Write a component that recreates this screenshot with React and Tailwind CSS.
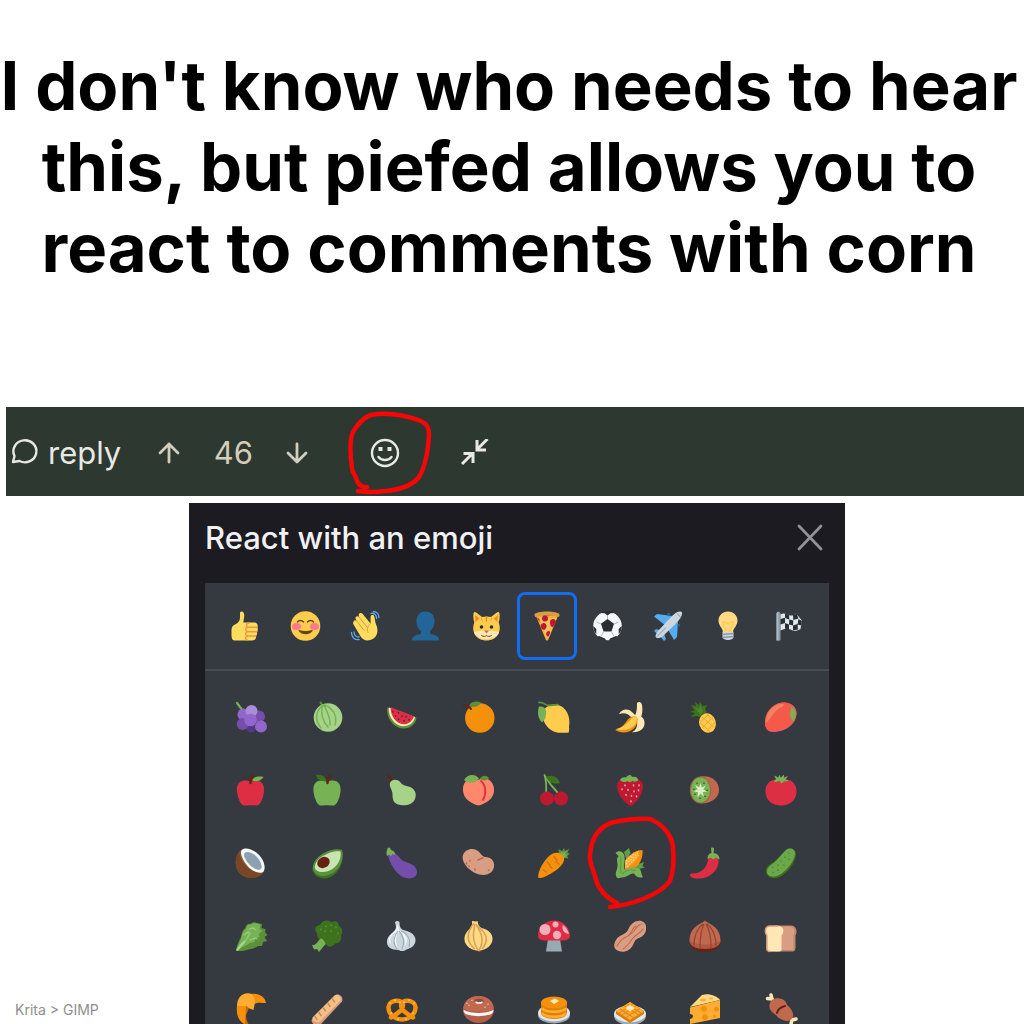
import React from 'react';

// Emoji artwork, every glyph is drawn on a 32x32 board
const art = {
  thumb: (
    <>
      <path fill="#ffdb5e" d="M11 2.5c1.5-2 4-.5 4.2 1.800.3 3-.7 6.200-.9 8.200H25c4 0 4 3.500 3.500 5 .5 2 .3 3.500-.5 4.500.3 2-.2 3.200-1 4 .3 3-1.500 4.500-4 4.500H6c-2.500 0-3.500-2-3.500-5v-5c0-3 .8-5 3.500-6 3.500-1.500 5-4 5-7 0-2 0-4 0-5z" />
      <path fill="none" stroke="#ee9547" strokeWidth="1.4" strokeLinecap="round" d="M18 30c-2-1-2-3.500.5-4-2.500-1-2.500-3.800 0-4.300-2.500-1-2.500-4 .3-4.400-2-1.300-1.500-4.300 1-4.300M18.500 17.300h9.500M18.500 21.700H28M18.500 26H27" />
    </>
  ),
  smile: (
    <>
      <circle cx="15.5" cy="16" r="14.8" fill="#ffcc4d" />
      <ellipse cx="6.5" cy="16.5" rx="4.5" ry="3.6" fill="#ff7892" />
      <ellipse cx="24.5" cy="16.5" rx="4.5" ry="3.6" fill="#ff7892" />
      <path fill="none" stroke="#664500" strokeWidth="1.3" strokeLinecap="round" d="M7.500 12c1.500-2 4.500-2 6 0M17.500 12c1.500-2 4.500-2 6 0" />
      <path fill="#664500" d="M9 20c4 1.200 9 1.200 13 0 .6 0 .8.5.4 1.200-3 4-10.600 4-13.500 0-.4-.7-.3-1.200.1-1.200z" />
    </>
  ),
  wave: (
    <>
      <path fill="#ffdc5d" d="M3.500 12c0-1.600 2-2.300 3.200-1L5.500 8.500C5 6.500 7.500 5.200 9 7L8.700 4.800c.2-2 2.500-2.500 3.800-1l8 9.700c.3-2-.2-5 .2-7 .3-1.800 3-2 3.600 0 .8 3.500.6 5 2 8.500 3 7 .2 14-7 15.300-4 .7-6.800-1-9-4.300l-7-12c-.5-.8-.2-1.400.2-2z" />
      <path fill="none" stroke="#ef9645" strokeWidth="1" strokeLinecap="round" d="M6.700 11l7.500 9.500M9 7l8 10M20.500 13.500c-3 2.500-4 5.500-2.500 9" />
      <path fill="none" stroke="#5dadec" strokeWidth="1.3" strokeLinecap="round" d="M21 3.500c3-1 6 2 5.500 5M23.500 1.500c3.500.2 5.500 3 5.400 6M1.500 22.500c0 5 3.500 7.700 7.500 7M4 22c.3 3.300 2 5 5 5" />
    </>
  ),
  bust: (
    <path fill="#226699" d="M15.500 1.500c5.500 0 9 4 9 9.500 0 4.500-1.800 8-4.500 10v3c5 .8 9 2 9.300 6.500H1.700C2 26 6 24.800 11 24v-3c-2.700-2-4.500-5.500-4.500-10 0-5.500 3.500-9.500 9-9.500z" />
  ),
  cat: (
    <>
      <path fill="#ffcc4d" d="M2.500 3.500c.3-2 1.500-2 3-.7L11 7a17 17 0 0 1 9 0l5.500-4.200c1.500-1.300 2.700-1.300 3 .7.500 4-.2 7-.8 9 3.500 9.500-2 18-12.200 18S-.2 22 3.300 12.500C2.700 10.500 2 7.500 2.500 3.500z" />
      <path fill="#f18f26" d="M4 5l4.500 3.500-4 3.500zM27 5l-4.500 3.500 4 3.500zM14.500 6.500h2l-.5 5h-1zM10.500 7l1.500 4.500L10 9zM20.500 7L19 11.500 21 9z" />
      <circle cx="10.5" cy="17" r="1.8" fill="#292f33" />
      <circle cx="20.5" cy="17" r="1.8" fill="#292f33" />
      <path fill="#fee7b8" d="M3 22l8-1.500 4.500 2 4.500-2 8 1.500c-2 9.500-23 9.500-25 0z" />
      <path fill="#e75a70" d="M13.300 20.500h4.400l-2.200 3z" />
      <path fill="none" stroke="#7a4b12" strokeWidth="1" strokeLinecap="round" d="M10.500 25.500c2 1.500 4 1 5 0 1 1 3 1.500 5 0" />
    </>
  ),
  pizza: (
    <>
      <path fill="#ffac33" d="M5 6h22L17.500 29c-.6 2-2.400 2-3 0z" />
      <path fill="#ffe8b6" d="M8 8h17l-8.500 20-2-2z" opacity=".35" />
      <path fill="#d99e42" d="M3.500 4.500c1-4 24-4 25 0 .3 2-1 3-2.300 2.300C20 5.500 12 5.500 6 7c-1.500.5-2.700-.7-2.500-2.500z" />
      <path fill="#be1931" d="M11 8.500a3 3 0 1 1 6 0 3 3 0 0 1-6 0zM19 12.500a3 3 0 1 1 5.500 1L22 17c-2 .2-3-2-3-4.500zM10 17.500a3 3 0 1 1 5 .5c-1 3-4 2-5-.5zM15.500 22.500c2-2.500 4-1.500 3.500.5l-1.500 3.500c-2 0-3-2-2-4zM6 8c2 0 3 1.500 2.500 4z" />
    </>
  ),
  ball: (
    <>
      <circle cx="15.5" cy="16" r="14.3" fill="#f5f8fa" />
      <path fill="#292f33" d="M15.500 9l6.500 4.800-2.500 7.700h-8L9 13.800zM1.300 16l3 3 0 5c-2-2-3.200-5-3-8zM29.700 16l-3 3 0 5c2-2 3.200-5 3-8zM7 26l6 2.500 1 1.800c-4 0-6.500-1.500-8.500-3.500zM24 26l-6 2.500-1 1.800c4 0 6.500-1.500 8.500-3.500zM8.500 3l4 .3 3 2.200 3-2.200 4-.3c-4-3-10-3-14 0z" />
      <path fill="none" stroke="#99aab5" strokeWidth=".8" d="M15.500 5.500V9M22 14l4.500-2M19.500 22l3 5M11.500 22l-3 5M9 14l-4.500-2" />
    </>
  ),
  plane: (
    <>
      <path fill="#55acee" d="M2 6.500L5 4l15 2-6 10zM26 12l-1 15-3 3-7-12zM2 21l2-2 7 2 3 8-2 2-4-5z" />
      <path fill="#226699" d="M15 3.500l2-1 1.500 2-2 2zM27 17l1.500-2-1.500-1.500-2 2z" />
      <path fill="#ccd6dd" d="M27.500 1.500c2-.5 3 .7 2.500 2.500-.5 3-2.500 5.500-4.500 8L11 26c-3 2.500-6 2.500-7 1.500s-.5-3.500 2-6.500L20 6c2.500-2.300 4.500-4 7.500-4.500z" />
      <path fill="none" stroke="#8899a6" strokeWidth="1" d="M5 26.500l9-9M25 3.500L28.500 7" />
    </>
  ),
  bulb: (
    <>
      <path fill="#ffd983" d="M16 1.500c5.500 0 9.500 4 9.500 9 0 5.500-4.500 7.500-4.500 12H11c0-4.500-4.500-6.500-4.500-12 0-5 4-9 9.500-9z" />
      <path fill="none" stroke="#ffcc4d" strokeWidth="1.5" d="M14.500 22l-4-9.500c2.500-2 3.500 1.500 5.500 1.500s3-3.500 5.500-1.500L17.500 22" />
      <path fill="#ccd6dd" d="M10.500 22h11v5c0 4-11 4-11 0z" />
      <path fill="none" stroke="#8899a6" strokeWidth="1.3" d="M10.500 24.500l11-1M10.500 27.500l11-1" />
    </>
  ),
  flag: (
    <>
      <path fill="#8899a6" d="M3.500 4c0-3 4-3 4 0v26.500h-4z" />
      <path fill="#aab8c2" d="M3.500 4c0-1.500.8-2.300 2-2.300v28.800h-2z" />
      <path fill="#e1e8ed" d="M7.500 4.500c3-2 5-1 8 .5 2.500 1 5 1 7.500-1.500l6 7-1.500 8.500c-4 2.500-7 2-10 .5-3.500-1.500-6-1-10 1z" />
      <path fill="#292f33" d="M12 3.500L16 5l.3 4.500L12 8zM20 5.300l3.500-1.800 2 5-5.200 1.500zM7.500 9L12 7.800V13l-4.500 1.500zM16.300 9.500l4 1-.3 5-4-1zM25.500 9l3.500 2-.8 4.500-3.700-1zM12 13l4 1.500v5l-4-1zM20 15.500l4.500-1.500.5 5.500-5 .8z" />
    </>
  ),
  grapes: (
    <>
      <path fill="none" stroke="#77b255" strokeWidth="2.2" strokeLinecap="round" d="M2 2l4.500 6" />
      <circle cx="16" cy="26.5" r="5" fill="#553788" />
      <circle cx="24" cy="15.5" r="6" fill="#744eaa" />
      <circle cx="8.5" cy="13.5" r="6" fill="#9266cc" />
      <circle cx="7.7" cy="23" r="6" fill="#744eaa" />
      <circle cx="16.5" cy="10" r="6" fill="#aa8dd8" />
      <circle cx="15.5" cy="19" r="6.3" fill="#9266cc" />
      <circle cx="26" cy="25.5" r="6" fill="#9266cc" />
    </>
  ),
  melon: (
    <>
      <path fill="none" stroke="#5c913b" strokeWidth="2" strokeLinecap="round" d="M9.500 1.500l2 3" />
      <circle cx="17" cy="16.5" r="14.3" fill="#a6d388" />
      <path fill="none" stroke="#77b255" strokeWidth="1.5" strokeLinecap="round" d="M11 5C3 12 5 21 10 27M12 4c-3 8 0 17 5 22M13 4c3 7 7 13 6 20M14 4c7 3 13 10 10 20" />
    </>
  ),
  watermelon: (
    <>
      <path fill="#5c913b" d="M1.300 6.500C0 17 7.500 27 17 27.500c7.500.3 13-4.500 13.500-11z" />
      <path fill="#ffe8b6" d="M2.800 6.500C2 16 9 25 17 25.300c6.500 0 11-4 12-9.300z" />
      <path fill="#dd2e44" d="M4.800 6C4 15 10.500 23 17.500 23.300c5 0 9-3.500 10.500-7.800C21 12 11 9 4.800 6z" />
      <path stroke="#292f33" strokeWidth="1.300" strokeLinecap="round" d="M7 10.500v.5M9.500 15v.5M12.500 11.500v.5M12.500 18v.5M16 15v.5M18 19.500v.5M20 15.500v.5M23 18.500v.5" />
    </>
  ),
  orange: (
    <>
      <circle cx="17.800" cy="17" r="14.700" fill="#f4900c" />
      <path fill="none" stroke="#662113" strokeWidth="2" strokeLinecap="round" d="M2 4.500c2.500-.5 5 0 7 3.500" />
      <path fill="#5c913b" d="M7 5c2-4.500 7-5.500 12-3.500-2 4-7 6-12 3.500z" />
    </>
  ),
  lemon: (
    <>
      <path fill="#ffcc4d" d="M5 11c2-6 9-8.500 15-7 8 2 13 11 11 22 .3 1.500.3 3-.3 5.500-2 .3-4 .3-7 .2C13 33 3 22 5 11z" />
      <path fill="#77b255" d="M1 5.500c4-.5 6 1 7 4 .5 5-.5 9-4 12C0 18-1 11 1 5.500z" />
      <path fill="none" stroke="#5c913b" strokeWidth="1.800" strokeLinecap="round" d="M1 1.500c4-.5 6 2 9 3l10-.8" />
    </>
  ),
  banana: (
    <>
      <path fill="#ffe8b6" d="M5 13c2-4.500 9-6.500 13-2l4 4c5-1 8 2 8.500 6 .7 6-4 10.500-12.500 10.200 3-1.500 6-5 5-10.500L17 16c-3-3-6-5-12-3z" />
      <path fill="#ffe8b6" d="M23 2c2-2 4.500-.5 5 2 .8 5 .5 10-2 14l-6-2c3-4 3-9 3-14z" />
      <path fill="#f4900c" d="M1 29c5-1.500 8-4 11-8 3-4.500 7-7 11-5 2 6-1.500 12-8 14.500-5 2-10 .8-14-1.500z" />
      <path fill="#ffcc4d" d="M2 28c6-1 11-5 14-9 2-2.500 4-4 6.500-3.500 1.500 6-2 10.500-8 12.500-4 1.300-9 1.500-12.500 0z" />
    </>
  ),
  pineapple: (
    <>
      <path fill="#3e721d" d="M2 4l5 1-1-4 4 3 1-3.500 2.500 4.500 5-1-2.500 4 2 3-3 4-4 1-3-1-6.500 1L6 12l-5-1 4.500-2z" />
      <path fill="#5c913b" d="M5 6l5 2 1-4 3 6-2 4z" opacity=".6" />
      <ellipse cx="18.5" cy="22" rx="8.3" ry="9.8" fill="#ffcc4d" transform="rotate(-18 18.5 22)" />
      <path fill="none" stroke="#f4a52c" strokeWidth="1" d="M11 21.500l10 9M13 16l13 11M18 13.500l7 6M24 16L13 27M26 21l-8 9M19.500 13.500L11.500 21" />
    </>
  ),
  mango: (
    <>
      <path fill="#ea596e" d="M0 23C-1 12 8 1.500 19 1.500c8 0 12.500 5 12.500 11C31.500 22 22 31 8 31c-5 0-7.500-3-8-8z" />
      <path fill="#f4594a" d="M0 23C-1 12 8 1.500 19 1.500c8 0 12.500 5 12.500 11C31 21 22 29.500 8 30c-5 0-7.500-3-8-7z" />
      <path fill="#f18260" d="M1 19C2 9 10 3 17 3c2 0 2.500 2 0 3C9 9 7 17 1 22z" />
      <path fill="#77b255" d="M27 5.500c4 3.500 5.500 9.500 1 15-3-3-4-10-1-15z" />
    </>
  ),
  apple: (
    <>
      <path fill="#dd2e44" d="M15.500 8c9-4 14.500 1 13.500 9.500-.8 7-4 14-7 14-2.500 0-3.500-.3-6.500-.3s-4 .3-6.500.3c-3 0-6.200-7-7-14C1 9 6.500 4 15.500 8z" />
      <path fill="none" stroke="#662113" strokeWidth="2.400" strokeLinecap="round" d="M15.500 9c0-3 .5-5.500 2.500-7.500" />
      <path fill="#77b255" d="M17 6.500c2-4 7-4.500 11.500-3.500-2.500 4-7 5-11.500 3.500z" />
    </>
  ),
  greenApple: (
    <>
      <path fill="#77b255" d="M16 8c9-4 14.500 1 13.500 9.500-.8 7-4 14-7 14-2.500 0-3.500-.3-6.500-.3s-4 .3-6.500.3c-3 0-6.200-7-7-14C1.500 9 7 4 16 8z" />
      <path fill="none" stroke="#662113" strokeWidth="2.400" strokeLinecap="round" d="M16.500 9c0-3 .5-5.500 2.500-7.500" />
      <path fill="#3e721d" d="M15.500 7C11 8 6 5.500 5 1c5-.7 9.500 1.500 10.500 6z" />
    </>
  ),
  pear: (
    <>
      <path fill="none" stroke="#662113" strokeWidth="2.500" strokeLinecap="round" d="M3 2c1 2 2.500 4 4.500 7" />
      <path fill="#a6d388" d="M4 9c2-4.500 8-4 11 0 2 2.800 5 2.500 9 4 6 2.500 7 8.500 4.500 13-2.500 4.500-8 6-14 5C7 30 6.500 25 6.500 20c0-4-3.500-7-2.500-11z" />
    </>
  ),
  peach: (
    <>
      <path fill="#ff886c" d="M16 6c9-5 16.500 2 16 10.500-.3 8.500-8 13-15.500 15C9 29.500 1.500 25 1 16.500.5 8 7 1 16 6z" />
      <path fill="none" stroke="#dd2e44" strokeWidth="1.800" strokeLinecap="round" d="M19 7c5 4 5.500 13 2 19" />
      <path fill="#77b255" d="M2 6c3.500-6 11-6.500 15-1.500-4 5-10 5.500-15 1.500z" />
      <path fill="#5c913b" d="M17.500 5c3-4 7-4 9.500-1-2 3-6 3-9.500 1z" />
    </>
  ),
  cherries: (
    <>
      <path fill="none" stroke="#77b255" strokeWidth="1.800" strokeLinecap="round" d="M6.500 1c2 6 2 12 1.500 19M7 2c4 7 8 12 13 17" />
      <path fill="#3e721d" d="M8 3c5-2.500 12-1 14 6-5 2-11 0-14-6z" />
      <circle cx="9" cy="24.500" r="7" fill="#be1931" />
      <circle cx="23" cy="24.500" r="7" fill="#be1931" />
    </>
  ),
  strawberry: (
    <>
      <path fill="#be1931" d="M3 12C3 6 9 4 16 4s13 2 13 8c0 8-6 16-11 19.500-1.500 1-3 0-4-1C8 26 3 19 3 12z" />
      <path fill="#77b255" d="M6 6c1-2 3-3 6-2.500 2-3 5-3.500 6-.5 3-1 5.500 0 6.500 3-2 2-4.500 2-6 1-2 1.500-4 1.500-5 0-2 1.500-5 1.500-7.500-1z" />
      <path stroke="#f4abba" strokeWidth="1.500" strokeLinecap="round" d="M8 15v.7M11 11v.7M14 15.500v.7M19.500 11v.7M25 11v.7M20 17v.7M24.500 16v.7M12 20.500v.7M17.500 21.500v.7M22.500 22v.7M17 27v.7" />
    </>
  ),
  kiwi: (
    <>
      <path fill="#c1694f" d="M11 2.500C22 .5 30 7 30 16c0 8-8 13.500-18 13.500z" />
      <ellipse cx="11.500" cy="16" rx="10.700" ry="13.500" fill="#a0673f" />
      <ellipse cx="11.500" cy="16" rx="9.600" ry="12.500" fill="#77b255" />
      <path fill="#d8efc0" d="M11.500 9l1.300 4.500 4-2-2.500 4 4 2-4.500.6 1 4.900-3-3.500-3.500 4 .7-5.200-4.500-1 4-1.700-2.500-4.500 4.200 2.200z" />
      <path stroke="#292f33" strokeWidth="1.100" strokeLinecap="round" d="M8 9v.5M15 9v.5M5 15v.5M18 16v.5M6 20v.5M16 22v.5M11 24v.5" />
    </>
  ),
  tomato: (
    <>
      <path fill="#dd2e44" d="M16 5.500c10-1.500 16 4 15.500 12.500C31 27 24 31.500 16 31.500S1 27 .5 18C0 9.500 6 4 16 5.500z" />
      <path fill="#77b255" d="M9 1.500l4.500 2L14 .5l2 3 3-3v3l4-1.500-2.500 3.500L24 7l-5 .5-2.500 2-2-2.500-6 1.500 2.500-3.500z" />
    </>
  ),
  coconut: (
    <>
      <path fill="#8b5e3c" d="M8 2C-.5 6-1.500 20 5 26.500 12 33.500 25 32 29.500 24z" />
      <path fill="#7a4625" d="M5 5c0 10 8 20 23 21-5 6-16 7-22.500 1C-.5 21-1 10 5 5z" />
      <path fill="#f5f8fa" d="M6.500 3.500C9 0 17 1.500 23 7c6.500 6 8 14 5.500 17.500C25 28 16 24 11 17 7 11.500 5 6.500 6.500 3.500z" />
      <path fill="#8ea1b0" d="M9.500 6c2-2 8-.5 12 3.500 5 5 6 10.500 4.500 12.500-2.500 2-9-1-12.500-5.500S8 8.500 9.500 6z" />
    </>
  ),
  avocado: (
    <>
      <path fill="#3e721d" d="M31.500 5C33 14 28 28 17 31 8 33 1 28 1.500 20z" />
      <path fill="#5c913b" d="M31 3c2 8-1 18-9 23-7 4.500-16 4-19.500-2C0 18 5 10 13 6c6-3 12-5 18-3z" />
      <path fill="#c6e5b3" d="M29.500 4.500c1 6-1.500 13-8 17.500-5.500 4-14 4-17 .5C2 18.500 6.500 11 14 8c5-2.500 10-4.500 15.500-3.500z" />
      <ellipse cx="12.500" cy="15.500" rx="6.500" ry="5.300" fill="#662113" transform="rotate(-30 12.5 15.5)" />
    </>
  ),
  eggplant: (
    <>
      <path fill="#744eaa" d="M2 8c3-4 8-2 11 2 3.500 4.500 7 5 12 7 7 3 7.500 10 3.500 13-4 2.500-11 2-17-4C7 21 3 14 2 8z" />
      <path fill="#77b255" d="M1.500 1.500C3-.5 4.500 1 5 3c3 .5 4 2.500 4.500 5L6.500 7 5 9 3 7.500 1 9C0 6.500.5 4 1.500 1.500z" />
    </>
  ),
  potato: (
    <>
      <path fill="#d99e82" d="M1 8C3 2 11 0 16 4c3 2.500 3.500 5 7 6 6 0 10 4 9 10-1.500 8-11 10-19 6C5 22-1 14 1 8z" />
      <path fill="none" stroke="#b55f4d" strokeWidth="1.400" strokeLinecap="round" d="M16 13c2-.5 3-2 5-2M4.500 16v1M8 13.500v.5M7 19v.5M13 22v1M26.500 23v.5" />
    </>
  ),
  carrot: (
    <>
      <path fill="#5c913b" d="M21 7l-.5-5 3.500 2 2-3 1 3 4.500-2.500-2 4 2.500 1.500-3 1.500 1.500 3-6-.5z" />
      <path fill="#77b255" d="M21 8l3-4 1 2 4-3-2 4 3 1-4 3z" />
      <path fill="#f4900c" d="M.5 31C-1 24 8 10 14 7c5-3 11-.5 12 4 1 6-7 12-13 15.500C8 29.500 4 31.500.5 31z" />
      <path fill="none" stroke="#d07305" strokeWidth="1.400" strokeLinecap="round" d="M9 15l3 3M16 9.500l3 4M14 21l-2-1.500M8 25l-3-2.500M21 17l-3-2" />
    </>
  ),
  corn: (
    <>
      <path fill="#5c9e4a" d="M10 5l5-4 1.500 5-4 7zM22 18l8-3-1.500 4 2.500 1.500-8 2z" />
      <path fill="#f4900c" d="M11 14c4-6 10-10.500 17.500-11 .8 8-3 16-10.500 20.500L11 22z" />
      <path fill="#ffac33" d="M11 14c3-5 8-8.500 14-10.500-1 7-5 13-12 17l-2 1z" />
      <path fill="none" stroke="#ffd983" strokeWidth="1.200" strokeDasharray="1.500 1.500" d="M12 14l9-8M12 17L24 6M13 20L25 8" />
      <path fill="#77b255" d="M1.500 6C5 2.500 9.500 4.500 10.500 9c.8 4-1 9 0 13.500 5-2 11-3.500 14.500-1 3 2 1.500 5 4 8.500-4 1.500-7 0-9-3.500-4 0-6 2.500-9 3.500-2 .8-4 0-5 1-2 .5-4-.5-4-2.500C1 25 4 22 3.500 17c-.5-3-1-6 1-8z" />
      <path fill="none" stroke="#5c9e4a" strokeWidth="1.200" strokeLinecap="round" d="M6.500 9c1.500 6-1 11 .5 17M8 27c4-4 9-4.500 13-3.500" />
    </>
  ),
  pepper: (
    <>
      <path fill="#dd2e44" d="M20 9c3-3 9-1 9.500 4 .8 8-6 16-15 18-5 1-10 1-13-1.500-1.500-2 0-3.500 2-3C13 26.500 18 20 19 13z" />
      <path fill="#77b255" d="M22 1c2-1 3.500 0 3 2l-.5 3c4 .5 6 3 6 6.500l-4-2-2 2-3-2-3 1.500c0-3 1-5.500 4-6z" />
    </>
  ),
  cucumber: (
    <>
      <path fill="#3e721d" d="M21 3.500c4-4 11-1 10 5-1.500 8-8 17-16 21.500C8 33 0 30 1 23c.5-5 6-6 11-11 3-3 6-6.500 9-8.500z" />
      <path fill="#6aa84a" d="M21 3c4-3 9.500-1 9 4-1 8-8 16-15 20.500-6 3.500-13 2.500-13-3 0-5 5-6.500 10-11.500 3-3 6-7.500 9-10z" />
      <path stroke="#3e721d" strokeWidth="1" strokeLinecap="round" d="M24 6v.5M20 10v.5M24 12v.5M16 14v.5M19 18v.5M13 18v.5M13 23v.5M8 20v.5M8 25v.5" />
    </>
  ),
  lettuce: (
    <>
      <path fill="#5c913b" d="M1 31C2 24 5 19 6.500 16c0-4 2-7 4-8 0-3 3-5 5-4 2-2.500 5-2 6-1l5.500 1-.5 4 4 1-.5 3 2.500 3-3 2 2.500 4-4 1-1 4h-4c-4 3-10 3-15 5z" />
      <path fill="#77b255" d="M1.500 30c2-6 5-10 5-14 1-2 2-5 4.500-7 0-3 3-5 5-4.500 3-2.500 8-1 9.500.5l-1 4 3 2-4 3 1 3-4 2-1 3-5 1c-3 3-9 4-13 7z" />
      <path fill="none" stroke="#9ccc80" strokeWidth="1.200" strokeLinecap="round" d="M3 29c6-5 9-10 12-16M9 15l4-3 2 2M14 9l4-1 3 2M15 20l5-2 2 1" />
      <path fill="none" stroke="#a6d388" strokeWidth="2.500" strokeLinecap="round" d="M2.500 29.500L9 22" />
    </>
  ),
  broccoli: (
    <>
      <path fill="#77b255" d="M1 25c3 1 6-3 9-8l7 3c-1 4-4 5-6.500 9L8 32l-2-3-3 .5z" />
      <path fill="#3e721d" d="M6 13C2 9 5 5 9 5c2-5 8-5.500 11-3 4-2 8 0 8 4 4 2 4 7 2 9 1.500 5-2 9-6 8.500-3 4-7 4-9 1-1-2-3-6-5-6-3 1-4-2-4-5.500z" />
      <path stroke="#5c913b" strokeWidth="1.600" strokeLinecap="round" d="M10 9v.5M15 6v.5M20 5v.5M25 7v.5M14 11v.5M20 11v.5M27 13v.5" />
    </>
  ),
  garlic: (
    <>
      <path fill="#ccd6dd" d="M9 2.500c1-2 3-2 4.500-.5 0 4 .5 6 3.500 8 6 1.500 12 3.500 12.500 9.500.5 6-5 9-9 10-3 2-6 2-8 .5C5 30 .5 27 1 21c.5-6 6-8 8-11 1.500-2 1-5 0-7.500z" />
      <path fill="#f5f8fa" d="M12 3c0 5 1 7 4 9 5 4 7 9 2 15C22 21 17 15 12 12c-2 4-3 9 0 16C6 26 7 17 10 12 5 15 3 20 5 25 0 20 5 14 9 11c2-2 2-5 3-8z" />
      <path fill="none" stroke="#9aabb6" strokeWidth="1.100" d="M12 11C7 17 7 24 11 29M13 11c5 5 6 12 3 18M15 11c7 3 10 9 8 16" />
    </>
  ),
  onion: (
    <>
      <path fill="#ffd983" d="M10 1l4 .5 1.500-.5c.5 3 1 5 4 7C27 10 31 14 30.500 19.500 30 26 24 29.500 17 31 9 30 3 26 2.500 20 2 14 6 10 10 7z" />
      <path fill="none" stroke="#d9a456" strokeWidth="1.600" d="M12 3C5 12 3 21 13 29M13 4c-2 9-3 17 3 26M14 4c5 8 9 17 3 26M15 6c9 6 13 14 5 23" />
      <path fill="#c1694f" d="M13 30l3.500.7 4-.7-3 1.800z" />
    </>
  ),
  mushroom: (
    <>
      <path fill="#99aab5" d="M10 19h12l2 12.500H8z" />
      <path fill="#dd2e44" d="M0 15C1 6 8 .5 16 .5S31 6 32 15c.3 4-3 5.500-8 5.500H8C3 20.500-.3 19 0 15z" />
      <circle cx="7" cy="9.500" r="5.500" fill="#f4abba" />
      <circle cx="17.500" cy="4.500" r="3" fill="#f4abba" />
      <circle cx="19" cy="15" r="4.200" fill="#f4abba" />
      <path fill="#f4abba" d="M25 5c3 2 5 5 6 9-4 0-8-4-6-9z" />
    </>
  ),
  peanut: (
    <>
      <path fill="#d99e82" d="M19 3c5-4 12-2 13 3 .8 6-2 10-7 12-4 1.500-4 3-6 7-3 6-9 8-14.500 6S-.5 24 2 20c3-5 8-5 11-8.500C15 9 15 6 19 3z" />
      <path fill="none" stroke="#c1694f" strokeWidth="1.100" strokeLinecap="round" d="M28 4c-4 0-6 4-8 7s-6 5-10 7-5 5-7 8M29 9c-3 5-7 5-10 9s-5 8-10 11M22 6c-4 2-4 7-8 10" />
    </>
  ),
  chestnut: (
    <>
      <path fill="#c1694f" d="M16 .5C18 3 27 5 30 13c2 5 2 10-1 13-6 5-20 5-26 0-3-3-3-8-1-13C5 5 14 3 16 .5z" />
      <path fill="#662113" d="M.5 22c6 5 25 5 31 0-.5 6-6 10-15.500 10S1 28 .5 22z" />
      <path fill="#b05a41" d="M.3 20c7 6 24.400 6 31.400 0-.2 6-6 9-15.700 9S.5 26 .3 20z" />
      <path fill="none" stroke="#974530" strokeWidth="1.300" d="M14 4C7 9 5 17 5 26M15 4c-3 6-4 13-4 24M17 4c4 6 5 13 5 24M18 4c7 5 9 13 9 22" />
    </>
  ),
  bread: (
    <>
      <path fill="#c1866b" d="M9 5.500h17c5 0 7 6 4.500 10v12c0 2.500-1 4-3 4H4z" />
      <path fill="#d99e82" d="M9 6.500h16c4 0 6 5 3.500 8.500V30H12z" />
      <path fill="#ffe8b6" d="M5 6h8c5.500 0 7 6 3.500 9.500V29c0 1.500-.5 2.500-2 2.500H4c-1.500 0-2.500-1-2.500-2.500V15.500C-1.500 12 0 6 5 6z" />
      <path fill="none" stroke="#d99e82" strokeWidth="1.300" d="M13.500 6H5C0 6-1 12 2 15.500V29c0 2 1 2.500 3 2.500" />
    </>
  ),
  croissant: (
    <>
      <path fill="#c66900" d="M4 13h11l-4 9c0 5 2 9 5 12-9-1-15-10-14-20z" />
      <path fill="#f4900c" d="M2 13h9l-1 18c-6-2-9-9-8-18z" />
      <path fill="#f4900c" d="M15 1c7-1 15 2 16 9-4 0-8-1-12 1z" />
      <path fill="#ffac33" d="M2 13C2 4 8-1 15 .5c4 1.500 6 6 4.500 11.500l-1 5-4-1.500-3-2.500z" />
    </>
  ),
  baguette: (
    <>
      <path fill="#d99e82" d="M24 2.500c4-3 9 2 7 6L10 31c-4 3-9 1-9.500-4z" />
      <path fill="#f5bf85" d="M23.500 2.500c3-2.500 7.500 1 6 5L9 28.500c-3 2-8 0-7.500-4z" />
      <path fill="none" stroke="#c68a55" strokeWidth="1.400" strokeLinecap="round" d="M21.500 6l2 3M17 10.500l2 3M12.500 15l2 3M8 19.500l2 3M4 23.500l2 3" />
    </>
  ),
  pretzel: (
    <>
      <path fill="none" stroke="#f4900c" strokeWidth="4.400" strokeLinecap="round" d="M5 24.500c4-3 12-6 12-12.500 0-6-14-6-14.500 2C2 20 8 26.500 16 26.500S30 20 29.500 14C29 6 15 6 15 12c0 6.500 8 9.500 12 12.500" />
      <path stroke="#ffd983" strokeWidth="1.300" strokeLinecap="round" d="M4 10v.5M9 7v.5M14 9v.5M18 9v.5M23 7v.5M28 10v.5M5 20v.5M27 20v.5M12 26v.5M20 26v.5" />
    </>
  ),
  bagel: (
    <>
      <ellipse cx="16.500" cy="16.500" rx="15.500" ry="13.500" fill="#b55f48" />
      <path fill="#f5f8fa" d="M1.500 17c8 4 22 4 30 0 0 3-3 5-6 5-5 1.500-13 1.500-18 0-4-.5-6-2-6-5z" />
      <path fill="#c1694f" d="M1.500 15C2 7 9 3 16.500 3S31 7 31.500 15c-4 5-26 5-30 0z" />
      <ellipse cx="17" cy="8" rx="4.500" ry="2.200" fill="#8a4b38" />
      <path fill="none" stroke="#f5f8fa" strokeWidth="1.500" d="M13.500 9c2 1.200 5 1.200 7 0" />
      <path stroke="#ffe8b6" strokeWidth="1" strokeLinecap="round" d="M7 12v.5M10 7v.5M26 11v.5M23 14v.5M5 10v.5" />
    </>
  ),
  pancakes: (
    <>
      <ellipse cx="16" cy="22" rx="16" ry="8.500" fill="#99aab5" />
      <ellipse cx="16" cy="20" rx="16" ry="8.500" fill="#e1e8ed" />
      <path fill="#e07f08" d="M3 9h26v11c0 8-26 8-26 0z" />
      <path fill="none" stroke="#ffac33" strokeWidth="2.500" d="M4 15c3 5 21 5 24 0M4 20c3 5 21 5 24 0" />
      <ellipse cx="16" cy="9.500" rx="13" ry="6" fill="#f4900c" />
      <path fill="#ffe8b6" d="M12 8l5-2.500 4 2.500-5 3z" />
    </>
  ),
  waffle: (
    <>
      <ellipse cx="16" cy="23" rx="16" ry="9" fill="#99aab5" />
      <ellipse cx="16" cy="21" rx="16" ry="8.500" fill="#e1e8ed" />
      <path fill="#d97c0a" d="M2 18L16 9l14 9v3l-14 9L2 21z" />
      <path fill="#ffac33" d="M2 18L16 9l14 9-14 9z" />
      <path fill="none" stroke="#e58a14" strokeWidth="1.200" d="M6 16l14 9M10 13l15 9M13 11l14 9M26 15.500l-14 9M22 13L8 22M19 11L5 20" />
      <path fill="#ffe8b6" d="M11 15l5-3 5 3-5 3.500z" />
    </>
  ),
  cheese: (
    <>
      <path fill="#ffd983" d="M1 14L13 2c7-2 15 1 18 5z" />
      <path fill="#ffac33" d="M1 14.500L31 7v18L1 31v-5c4-1 4-5 0-5z" />
      <path fill="#f4900c" d="M12 15.500a3 3 0 1 1 0 .5zM13 24a3 3 0 1 1 0 .5zM25 16a2.500 2.500 0 1 1 0 .5zM24 23a1.500 1.500 0 1 1 0 .5z" />
      <ellipse cx="14" cy="7" rx="3" ry="1.500" fill="#ffac33" />
      <ellipse cx="22" cy="5.500" rx="2" ry="1" fill="#ffac33" />
    </>
  ),
  meat: (
    <>
      <path fill="none" stroke="#ffe8b6" strokeWidth="3.500" strokeLinecap="round" d="M2.500 5.500L7 6l20 21M6 2L7 6M26 31l1-4 4-1" />
      <path fill="#c1694f" d="M5 10c1-4 7-6 12-4 3 1 4 3 5 6 4 3 7 8 6 12-2 4-6 5-10 3s-5-2-7-5C6 19 3 15 5 10z" />
      <path fill="none" stroke="#662113" strokeWidth="2" strokeLinecap="round" d="M12 20c1-4 4-6 8-7" />
    </>
  ),
};

const categories = [
  { id: 'thumb', label: 'Frequent' },
  { id: 'smile', label: 'Smileys' },
  { id: 'wave', label: 'Gestures' },
  { id: 'bust', label: 'People' },
  { id: 'cat', label: 'Animals' },
  { id: 'pizza', label: 'Food' },
  { id: 'ball', label: 'Activities' },
  { id: 'plane', label: 'Travel' },
  { id: 'bulb', label: 'Objects' },
  { id: 'flag', label: 'Flags' },
];

const foods = [
  'grapes', 'melon', 'watermelon', 'orange', 'lemon', 'banana', 'pineapple', 'mango',
  'apple', 'greenApple', 'pear', 'peach', 'cherries', 'strawberry', 'kiwi', 'tomato',
  'coconut', 'avocado', 'eggplant', 'potato', 'carrot', 'corn', 'pepper', 'cucumber',
  'lettuce', 'broccoli', 'garlic', 'onion', 'mushroom', 'peanut', 'chestnut', 'bread',
  'croissant', 'baguette', 'pretzel', 'bagel', 'pancakes', 'waffle', 'cheese', 'meat',
];

function Emoji({ id }) {
  return (
    <svg viewBox="0 0 32 32" className="w-8 h-8 overflow-visible" aria-hidden="true">
      {art[id]}
    </svg>
  );
}

function Arrow({ down }) {
  return (
    <svg viewBox="0 0 24 24" className={down ? 'w-6 h-6 rotate-180' : 'w-6 h-6'} fill="none" stroke="currentColor" strokeWidth="2.8" strokeLinecap="round" strokeLinejoin="round">
      <path d="M12 21V3M3 12l9-9 9 9" />
    </svg>
  );
}

function CommentBar() {
  return (
    <div className="ml-1.5 h-[89px] shrink-0 bg-[#2d3830] flex items-center pl-1 pt-0.5 text-[#e9e9e4]">
      <button className="flex items-center gap-2.5 text-[31px] leading-9">
        <svg viewBox="0 0 28 28" className="w-7 h-7 overflow-visible" fill="none" stroke="currentColor" strokeWidth="2.4" strokeLinejoin="round">
          <path d="M3 23l1.500-6A11.500 11 0 1 1 9.500 22z" />
        </svg>
        reply
      </button>
      <div className="flex items-center ml-9 text-[#d3cdbb]">
        <button aria-label="Upvote"><Arrow /></button>
        <span className="w-[104px] text-center text-[31px] leading-9">46</span>
        <button aria-label="Downvote"><Arrow down /></button>
      </div>
      <button aria-label="React" className="relative ml-[61px]">
        <svg viewBox="0 0 30 30" className="w-[30px] h-[30px]" fill="none" stroke="currentColor" strokeWidth="2.4">
          <circle cx="15" cy="15" r="13" />
          <path strokeLinecap="round" d="M8.500 19c3 4 10 4 13 0" />
          <path fill="currentColor" stroke="none" d="M8.500 9h4v4h-4zM17.500 9h4v4h-4z" />
        </svg>
        {/* hand-drawn ring */}
        <svg viewBox="0 0 84 88" className="absolute -left-[22px] -top-[29px] w-[84px] h-[88px] max-w-none z-10 pointer-events-none" fill="none" stroke="#f80505" strokeWidth="4.5" strokeLinecap="round" strokeLinejoin="round">
          <path d="M19 78c-6 1-10-4-11-9-1-4-4-5-4-10-1-7-2-20-1-29C4 21 14 9 23 6c16-3 36 1 50 6 7 3 8 8 8 14-1 18-4 32-10 42-7 9-22 13-34 14-8 1-20 1-27 0" />
        </svg>
      </button>
      <button aria-label="Collapse" className="ml-[61px]">
        <svg viewBox="0 0 28 28" className="w-7 h-7" fill="none" stroke="currentColor" strokeWidth="3">
          <path d="M26.500 0L17 9.500M16 1v10h9M1 25l9.500-9.500M2.500 14.500H12V24" />
        </svg>
      </button>
    </div>
  );
}

function EmojiPanel() {
  return (
    <section className="w-[656px] shrink-0 bg-[#1c1b21] px-4 overflow-hidden">
      <header className="h-20 flex items-start justify-between pt-4">
        <h2 className="text-[31px] leading-[38px] font-medium text-[#f1f1f3]">React with an emoji</h2>
        <button aria-label="Close" className="text-[#929196] pt-1 pr-1">
          <svg viewBox="0 0 28 28" className="w-7 h-7" stroke="currentColor" strokeWidth="2.8" strokeLinecap="round">
            <path d="M2 3l22 23M24 3L2 26" />
          </svg>
        </button>
      </header>

      <div className="bg-[#353a40]">
        <nav className="h-[88px] px-2.5 grid grid-cols-10 items-center border-b-2 border-[#464c53]">
          {categories.map(({ id, label }) => (
            <button
              key={id}
              aria-label={label}
              className={`h-[68px] flex items-center justify-center rounded-lg ${id === 'pizza' ? 'border-[3px] border-[#146cf0]' : ''}`}
            >
              <Emoji id={id} />
            </button>
          ))}
        </nav>
        <div className="grid grid-cols-8 auto-rows-[73px] pl-2 pr-2.5 pt-[9px]">
          {foods.map((id) => (
            <button key={id} aria-label={id} className="relative flex items-center justify-center">
              <Emoji id={id} />
              {id === 'corn' && (
                <svg viewBox="0 0 88 92" className="absolute left-1/2 top-1/2 -ml-[42px] -mt-[46px] w-[88px] h-[92px] max-w-none overflow-visible z-10 pointer-events-none" fill="none" stroke="#f80505" strokeWidth="4.5" strokeLinecap="round" strokeLinejoin="round">
                  <path d="M29 86C15 79 9 69 7 59 5 52 1 45 2 39 3 18 14 8 26 5 37 3 50 1 62 2c13 5 22 17 23 28 1 12 0 26-3 34-6 8-17 14-27 18-13 5-23 7-33 8" />
                </svg>
              )}
            </button>
          ))}
        </div>
      </div>
    </section>
  );
}

export default function App() {
  return (
    <main className="h-screen overflow-hidden bg-white flex flex-col font-['Inter',sans-serif]">
      <h1 className="h-[407px] shrink-0 pt-[45px] pr-1.5 text-center text-[67px] leading-[81px] font-bold text-black whitespace-nowrap">
        I don't know who needs to hear<br />
        this, but piefed allows you to<br />
        react to comments with corn
      </h1>
      <CommentBar />
      <div className="flex flex-1 min-h-0 pt-[7px]">
        <p className="w-[189px] shrink-0 self-end pl-[15px] pb-1 text-sm leading-5 text-[#8e8e8e]">Krita &gt; GIMP</p>
        <EmojiPanel />
      </div>
    </main>
  );
}
